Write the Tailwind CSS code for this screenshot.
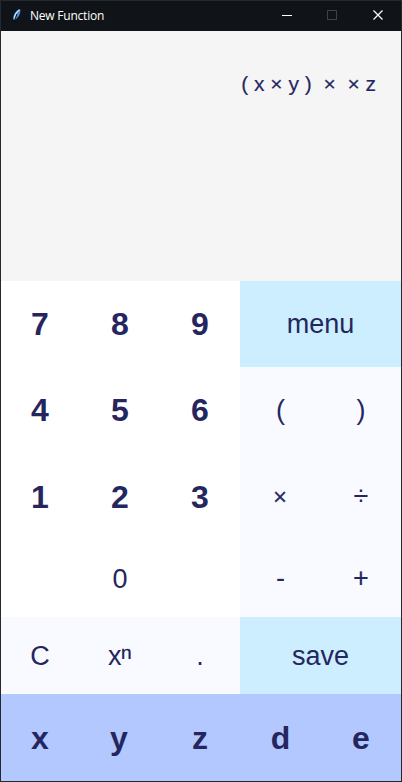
<!DOCTYPE html>
<html lang="en">
<head>
<meta charset="utf-8">
<title>New Function</title>
<script src="https://cdn.jsdelivr.net/npm/@tailwindcss/browser@4"></script>
</head>
<body class="w-[402px] h-[782px] overflow-hidden">
<main class="w-[402px] h-[782px] flex flex-col border border-[#24292e] bg-white text-[#25265e] font-['Liberation_Sans',Arial,sans-serif]">
  <header class="h-[30px] shrink-0 bg-[#101418] flex items-center text-white">
    <svg class="ml-[10px] w-[11px] h-[16px] shrink-0" viewBox="0 0 11 16">
      <path d="M3 12C2 8.500 4 3.500 8.800 1.500C9.300 5 7.500 9.500 3 12Z" fill="#4384d8" stroke="#6fa8e8" stroke-width=".8"/>
      <path d="M8.300 2C5.200 4 3.800 7 3.300 10.500" fill="none" stroke="#c5e5ff" stroke-width="1.300"/>
      <path d="M6 6L3 14" fill="none" stroke="#050708" stroke-width=".9"/>
    </svg>
    <h1 class="ml-[8px] text-[12px] leading-[16px] tracking-[-0.22px] font-['Open_Sans','Noto_Sans',sans-serif] whitespace-nowrap">New Function</h1>
    <div class="ml-auto flex">
      <svg class="w-[46px] h-[30px]" viewBox="0 0 46 30"><path d="M19 14.500h10" stroke="#fff"/></svg>
      <svg class="w-[46px] h-[30px]" viewBox="0 0 46 30"><path d="M18.500 9.500h9v9h-9z" fill="none" stroke="#3e4245"/></svg>
      <svg class="w-[46px] h-[30px]" viewBox="0 0 46 30"><path d="M18.500 9.500l9 9M27.500 9.500l-9 9" stroke="#fff" stroke-width="1.200"/></svg>
    </div>
  </header>
  <section class="h-[250px] shrink-0 bg-[#f5f5f5] flex justify-end pr-[25px] pt-[41px]">
    <output class="text-[21px] leading-[24px] whitespace-pre [-webkit-text-stroke:0.15px_#25265e]">( x × y )  ×  × z</output>
  </section>
  <section class="grid grid-cols-[79px_80px_80px_81px_80px] grid-rows-[86px_87px_86px_77px_77px_87px] text-[27px] leading-[30px] *:flex *:items-center *:justify-center">
    <button class="text-[32px] font-bold pr-px">7</button><button class="text-[32px] font-bold">8</button><button class="text-[32px] font-bold">9</button>
    <button class="col-span-2 bg-[#cceeff]">menu</button>
    <button class="text-[32px] font-bold pr-px pb-[2px]">4</button><button class="text-[32px] font-bold pb-[2px]">5</button><button class="text-[32px] font-bold pb-[2px]">6</button>
    <button class="bg-[#f8faff] pb-[2px]">(</button><button class="bg-[#f8faff] pb-[2px]">)</button>
    <button class="text-[32px] font-bold pr-px">1</button><button class="text-[32px] font-bold">2</button><button class="text-[32px] font-bold">3</button>
    <button class="bg-[#f8faff] pr-px text-[24px] [-webkit-text-stroke:0.15px_#25265e]">×</button><button class="bg-[#f8faff] pb-[2px]">÷</button>
    <span></span><button>0</button><span></span>
    <button class="bg-[#f8faff] pb-px">-</button><button class="bg-[#f8faff] pb-[2px] [-webkit-text-stroke:0.15px_#25265e]">+</button>
    <button class="bg-[#f8faff] pr-px">C</button><button class="bg-[#f8faff]"><span>x<span class="text-[32px] leading-[0] -ml-px relative top-[2px]">ⁿ</span></span></button><button class="bg-[#f8faff]">.</button>
    <button class="col-span-2 bg-[#cceeff]">save</button>
    <button class="bg-[#b3c8ff] text-[32px] font-bold pr-px">x</button><button class="bg-[#b3c8ff] text-[32px] font-bold pr-[2px]">y</button><button class="bg-[#b3c8ff] text-[32px] font-bold">z</button><button class="bg-[#b3c8ff] text-[32px] font-bold">d</button><button class="bg-[#b3c8ff] text-[32px] font-bold">e</button>
  </section>
</main>
</body>
</html>
